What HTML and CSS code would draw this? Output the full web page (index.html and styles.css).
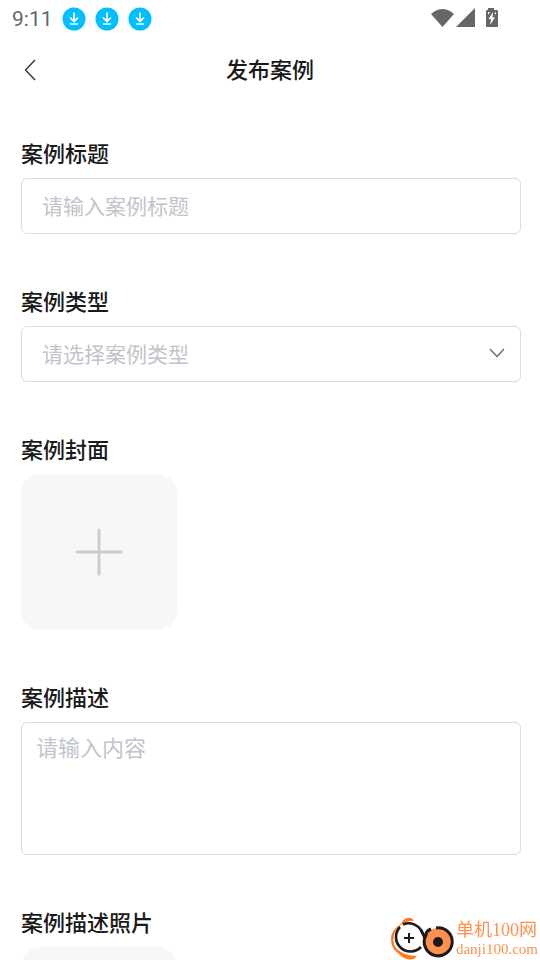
FILE: index.html
```html
<!DOCTYPE html>
<html lang="zh-CN">
<head>
<meta charset="utf-8">
<meta name="viewport" content="width=device-width, initial-scale=1">
<title>发布案例</title>
<link rel="stylesheet" href="styles.css">
</head>
<body>
<svg width="0" height="0" class="defs" aria-hidden="true">
  <symbol id="download" viewBox="0 0 24 24">
    <circle cx="12" cy="12" r="11.500" fill="#00bfff"/>
    <path d="M12 5.5v8.5M8 10.5l4 4 4-4M8 17h8" fill="none" stroke="#fff" stroke-width="1.700"/>
  </symbol>
  <symbol id="plus" viewBox="0 0 48 48">
    <path d="M24 2v44M2 24h44" fill="none" stroke="#ccc" stroke-width="3" stroke-linecap="round"/>
  </symbol>
</svg>
<div class="status">
  <span class="clock">9:11</span>
  <svg class="dl"><use href="#download"/></svg>
  <svg class="dl"><use href="#download"/></svg>
  <svg class="dl"><use href="#download"/></svg>
  <svg class="signals" viewBox="0 0 68 22" fill="#666">
    <path d="M0 7Q11.500 -3 23 7L11.500 20z"/>
    <path d="M44 1v19H25z"/>
    <path d="M57 1h6v2h3a1 1 0 0 1 1 1v15a1 1 0 0 1-1 1H56a1 1 0 0 1-1-1V4a1 1 0 0 1 1-1h1z"/>
    <path d="M62 5l-4.500 7H60l-1 6 5-7.500h-2.500zM57 5h2l-2 3zM65 5v3l-1.500-2z" fill="#fff"/>
  </svg>
</div>
<header class="nav">
  <button class="back" type="button" aria-label="返回">
    <svg viewBox="0 0 12 22"><path d="M11 1L1.500 11 11 21" fill="none" stroke="#333" stroke-width="1.400"/></svg>
  </button>
  <h1>发布案例</h1>
</header>
<form class="form">
  <div class="field">
    <label for="title">案例标题</label>
    <input id="title" class="control" type="text" placeholder="请输入案例标题">
  </div>
  <div class="field">
    <label for="type">案例类型</label>
    <div class="select-wrap">
      <select id="type" class="control"><option>请选择案例类型</option></select>
      <svg class="chevron" viewBox="0 0 16 10"><path d="M1 1l7 7.500L15 1" fill="none" stroke="#666" stroke-width="1.300"/></svg>
    </div>
  </div>
  <div class="field">
    <label for="cover">案例封面</label>
    <button id="cover" class="upload" type="button"><svg><use href="#plus"/></svg></button>
  </div>
  <div class="field">
    <label for="desc">案例描述</label>
    <textarea id="desc" class="control" placeholder="请输入内容"></textarea>
  </div>
  <div class="field">
    <label for="photos">案例描述照片</label>
    <button id="photos" class="upload" type="button"><svg><use href="#plus"/></svg></button>
  </div>
</form>
<div class="watermark">
  <svg viewBox="0 0 64 44">
    <path d="M24 5Q22 1 17 2Q13 3 11 8Q1 14 1 23Q1 33 9 38Q15 45 24 43L27 40Q14 40 7 33Q2 28 4 19Q6 12 14 7Q20 4 24 5z" fill="#ff7a1a"/>
    <circle cx="19" cy="22" r="15" fill="#fff"/>
    <path d="M13 8.500A14.500 14.500 0 0 1 32 16M10 11A14.500 14.500 0 1 0 31 31" fill="none" stroke="#1d1a1c" stroke-width="2.600"/>
    <path d="M19 17v10M14 22h10" stroke="#1d1a1c" stroke-width="2"/>
    <circle cx="48" cy="26" r="14" fill="#ff914d"/>
    <path d="M46 12A14 14 0 1 1 36 19Q36 15 41 13" fill="none" stroke="#1d1a1c" stroke-width="3"/>
    <path d="M31 14l4 8" stroke="#1d1a1c" stroke-width="3"/>
    <circle cx="48" cy="26" r="5" fill="#1d1a1c"/>
  </svg>
  <div class="mark-text"><span class="mark-name">单机<span class="digits">100</span>网</span><span class="mark-url">danji100.com</span></div>
</div>
</body>
</html>
```
FILE: styles.css
```css
* { box-sizing: border-box; }
body {
  margin: 0;
  height: 100vh;
  display: flex;
  flex-direction: column;
  overflow: hidden;
  background: #fff;
  color: #1a1a1a;
  font-family: "Noto Sans CJK SC", sans-serif;
}
.defs { position: absolute; }
.status {
  flex: none;
  display: flex;
  align-items: center;
  height: 37px;
  padding: 0 41px 0 12px;
}
.clock {
  margin-right: 9px;
  color: #666;
  font: 21px/36px Roboto, sans-serif;
}
.dl { width: 24px; height: 24px; margin-right: 9px; }
.signals { width: 68px; height: 22px; margin-left: auto; margin-bottom: 2px; }
.nav {
  flex: none;
  display: grid;
  grid-template-columns: 60px 1fr 60px;
  align-items: center;
  height: 65px;
}
.nav h1 {
  margin: 0;
  padding-bottom: 4px;
  font-size: 22px;
  line-height: 28px;
  font-weight: 500;
  text-align: center;
}
button { padding: 0; border: 0; background: none; cursor: pointer; }
.back { height: 44px; padding-left: 24px; text-align: left; }
.back svg { display: block; width: 12px; height: 22px; }
.form {
  flex: 1;
  min-height: 0;
  display: flex;
  flex-direction: column;
  gap: 52px;
  padding: 36px 19px 36px 21px;
  overflow-y: auto;
  scrollbar-width: none;
}
.field { flex: none; display: flex; flex-direction: column; gap: 12px; }
.field label { font-size: 22px; line-height: 28px; font-weight: 500; }
.control {
  display: block;
  width: 100%;
  height: 56px;
  padding: 0 20px 2px;
  border: 1px solid #dcdcdf;
  border-radius: 6px;
  background: #fff;
  color: #c0c4cc;
  font-family: inherit;
  font-size: 21px;
  outline: none;
}
.control::placeholder { color: #c0c4cc; opacity: 1; }
select.control { appearance: none; }
textarea.control {
  height: 133px;
  padding: 8px 14px;
  font-size: 22px;
  line-height: 30px;
  resize: none;
}
.select-wrap { position: relative; }
.chevron {
  position: absolute;
  top: 22px;
  right: 16px;
  width: 16px;
  height: 10px;
  pointer-events: none;
}
.upload {
  display: flex;
  align-items: center;
  justify-content: center;
  width: 156px;
  height: 156px;
  border-radius: 20px;
  background: #f7f7f7;
}
.upload svg { width: 48px; height: 48px; }
.watermark {
  position: fixed;
  right: 2px;
  bottom: 0;
  display: flex;
  align-items: center;
  gap: 2px;
  color: #ff914d;
  pointer-events: none;
}
.watermark svg { width: 64px; height: 44px; }
.mark-text { display: flex; flex-direction: column; }
.mark-name { font-size: 18px; line-height: 20px; }
.digits { font-family: "Liberation Serif", serif; }
.mark-url { font: 15px/18px "Liberation Serif", serif; }
```
